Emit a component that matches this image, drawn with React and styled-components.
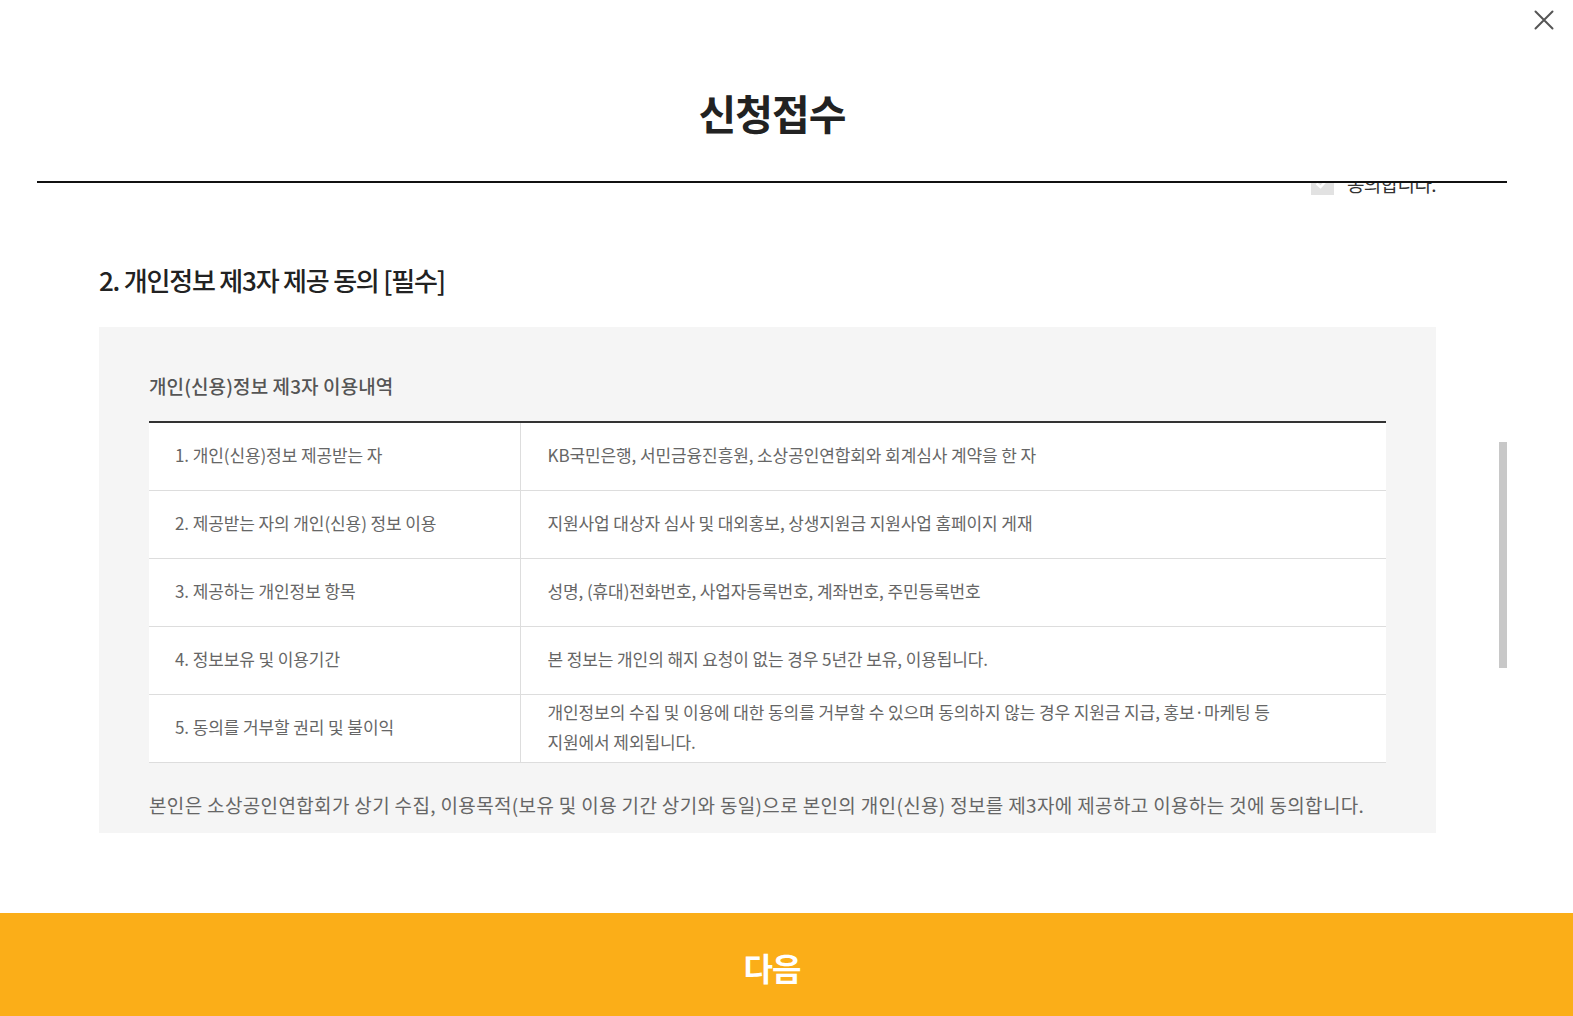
import React from "react";
import styled, { createGlobalStyle } from "styled-components";

const Global = createGlobalStyle`
  html, body { margin: 0; padding: 0; background: #fff; overflow: hidden; }
  body { font-family: "Noto Sans CJK KR", "Noto Sans", sans-serif; }
  * { box-sizing: border-box; }
`;

const Page = styled.div`
  height: 100vh;
  width: 100%;
  display: flex;
  flex-direction: column;
  position: relative;
  overflow: hidden;
`;

const CloseButton = styled.button`
  position: absolute;
  top: 8px;
  right: 17px;
  width: 24px;
  height: 24px;
  border: 0;
  background: none;
  padding: 0;
  cursor: pointer;
  display: flex;
  align-items: center;
  justify-content: center;
`;

const Main = styled.div`
  flex: 1;
  display: flex;
  flex-direction: column;
  margin: 0 66px 0 37px;
  min-height: 0;
`;

const Header = styled.header`
  height: 183px;
  flex-shrink: 0;
  border-bottom: 2px solid #111;
  display: flex;
  justify-content: center;
  padding-top: 83px;
`;

const Title = styled.h1`
  margin: 0;
  font-size: 41px;
  font-weight: 700;
  color: #222;
  letter-spacing: -1px;
  line-height: 58px;
  height: 58px;
`;

const ScrollArea = styled.div`
  flex: 1;
  overflow: hidden;
  position: relative;
  padding: 0 71px 0 62px;
`;

const Thumb = styled.div`
  position: absolute;
  right: 0;
  top: 259px;
  width: 8px;
  height: 226px;
  background: #c8c8c8;
`;

const AgreeRow = styled.div`
  display: flex;
  justify-content: flex-end;
  align-items: center;
  gap: 13px;
  margin-top: -14px;
  height: 28px;
`;

const CheckBox = styled.span`
  width: 23px;
  height: 23px;
  background: #e2e2e2;
  display: flex;
  align-items: center;
  justify-content: center;
`;

const AgreeText = styled.span`
  font-size: 19px;
  color: #333;
  letter-spacing: -0.6px;
`;

const SectionTitle = styled.h2`
  margin: 65px 0 0;
  font-size: 26px;
  line-height: 36px;
  font-weight: 500;
  color: #222;
  letter-spacing: -1.2px;
`;

const InfoBox = styled.div`
  margin-top: 29px;
  background: #f5f5f5;
  padding: 43px 50px 0;
  height: 506px;
`;

const BoxTitle = styled.h3`
  margin: 0;
  font-size: 19px;
  line-height: 32px;
  font-weight: 500;
  color: #555;
  letter-spacing: 0.1px;
`;

const Table = styled.table`
  margin-top: 19px;
  width: 100%;
  border-collapse: collapse;
  background: #fff;
  border-top: 2px solid #333;
  table-layout: fixed;
`;

const LabelCell = styled.td`
  width: 371px;
  height: 68px;
  padding: 0 26px 3px;
  border-bottom: 1px solid #ddd;
  border-right: 1px solid #ddd;
  font-size: 17px;
  color: #666;
  letter-spacing: -0.1px;
  vertical-align: middle;
`;

const ValueCell = styled.td`
  height: 68px;
  padding: 0 27px 3px;
  border-bottom: 1px solid #ddd;
  font-size: 17px;
  line-height: 30px;
  color: #666;
  letter-spacing: -0.1px;
  vertical-align: middle;
`;

const Notice = styled.p`
  margin: 27px 0 0;
  font-size: 19px;
  line-height: 30px;
  color: #666;
  letter-spacing: 0.35px;
  white-space: nowrap;
`;

const NextButton = styled.button`
  height: 103px;
  flex-shrink: 0;
  border: 0;
  padding: 4px 66px 0 37px;
  background: #fbae18;
  color: #fff;
  font-family: inherit;
  font-size: 32px;
  font-weight: 700;
  letter-spacing: -1px;
  cursor: pointer;
`;

const rows = [
  ["1. 개인(신용)정보 제공받는 자", "KB국민은행, 서민금융진흥원, 소상공인연합회와 회계심사 계약을 한 자"],
  ["2. 제공받는 자의 개인(신용) 정보 이용", "지원사업 대상자 심사 및 대외홍보, 상생지원금 지원사업 홈페이지 게재"],
  ["3. 제공하는 개인정보 항목", "성명, (휴대)전화번호, 사업자등록번호, 계좌번호, 주민등록번호"],
  ["4. 정보보유 및 이용기간", "본 정보는 개인의 해지 요청이 없는 경우 5년간 보유, 이용됩니다."],
  [
    "5. 동의를 거부할 권리 및 불이익",
    <>
      개인정보의 수집 및 이용에 대한 동의를 거부할 수 있으며 동의하지 않는 경우 지원금 지급, 홍보·마케팅 등
      <br />
      지원에서 제외됩니다.
    </>,
  ],
];

export default function App() {
  return (
    <Page>
      <Global />
      <CloseButton aria-label="닫기">
        <svg width="20" height="20" viewBox="0 0 20 20">
          <path d="M1.5 1.5 L18.5 18.5 M18.5 1.5 L1.5 18.5" stroke="#555" strokeWidth="2" strokeLinecap="round" />
        </svg>
      </CloseButton>
      <Main>
        <Header>
          <Title>신청접수</Title>
        </Header>
        <ScrollArea>
          <AgreeRow>
            <CheckBox>
              <svg width="14" height="11" viewBox="0 0 14 11">
                <path d="M1.5 5.5 L5.5 9 L12.5 1.5" stroke="#fff" strokeWidth="2.4" fill="none" />
              </svg>
            </CheckBox>
            <AgreeText>동의합니다.</AgreeText>
          </AgreeRow>
          <SectionTitle>2. 개인정보 제3자 제공 동의 [필수]</SectionTitle>
          <InfoBox>
            <BoxTitle>개인(신용)정보 제3자 이용내역</BoxTitle>
            <Table>
              <tbody>
                {rows.map(([label, value], i) => (
                  <tr key={i}>
                    <LabelCell>{label}</LabelCell>
                    <ValueCell>{value}</ValueCell>
                  </tr>
                ))}
              </tbody>
            </Table>
            <Notice>
              본인은 소상공인연합회가 상기 수집, 이용목적(보유 및 이용 기간 상기와 동일)으로 본인의 개인(신용) 정보를 제3자에 제공하고 이용하는 것에 동의합니다.
            </Notice>
          </InfoBox>
          <Thumb />
        </ScrollArea>
      </Main>
      <NextButton>다음</NextButton>
    </Page>
  );
}
